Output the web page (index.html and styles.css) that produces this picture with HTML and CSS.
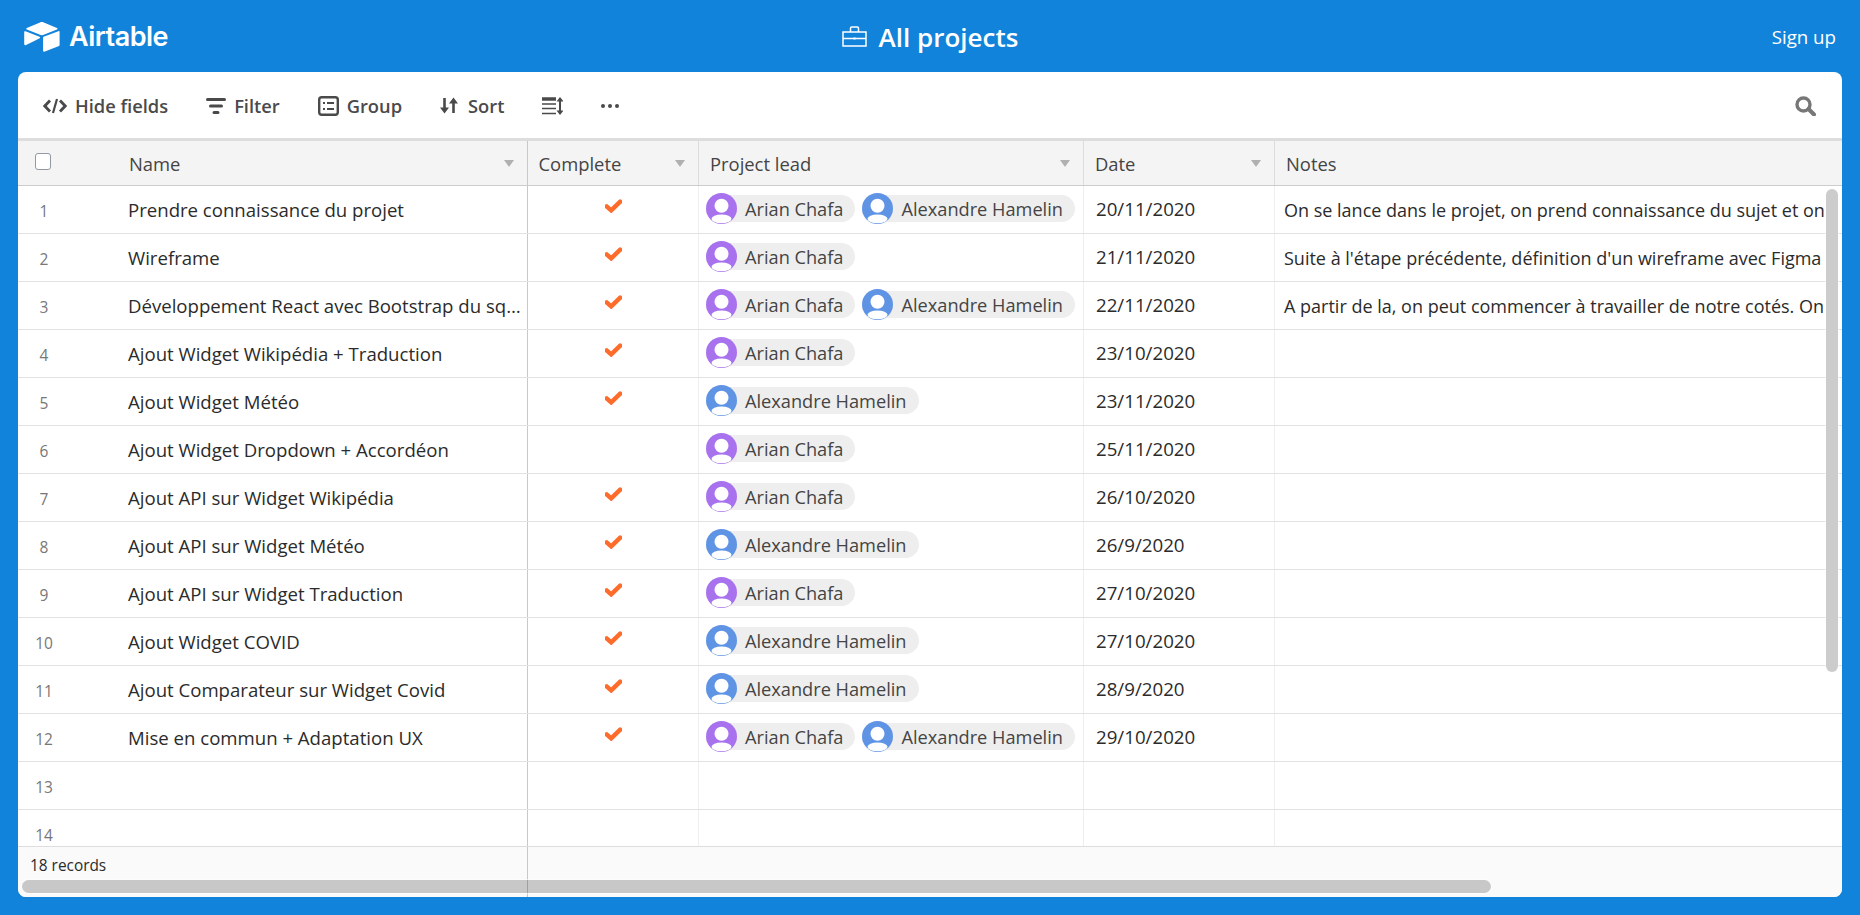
FILE: index.html
```html
<!DOCTYPE html>
<html lang="fr">
<head>
<meta charset="utf-8">
<title>All projects - Airtable</title>
<link rel="stylesheet" href="styles.css">
</head>
<body>
<svg class="defs" width="0" height="0" aria-hidden="true">
  <defs>
    <symbol id="avatar" viewBox="0 0 31 31">
      <circle cx="15.5" cy="15.5" r="15.5" fill="currentColor"/>
      <circle cx="15.5" cy="12.7" r="7" fill="#fff"/>
      <ellipse cx="15.5" cy="25.8" rx="10" ry="4.4" fill="#fff"/>
    </symbol>
    <symbol id="check" viewBox="0 0 17 14">
      <path d="M1.6 7.4 6.2 11.4 15.2 2.600" fill="none" stroke="currentColor" stroke-width="4.400" stroke-linecap="round"/>
    </symbol>
  </defs>
</svg>

<header class="topbar">
  <a class="brand">
    <svg class="logo" viewBox="0 0 200 170"><path d="M90.04 12.37 24.08 39.66c-3.67 1.52-3.63 6.73.06 8.19l66.24 26.27c5.82 2.31 12.3 2.31 18.12 0l66.23-26.27c3.69-1.46 3.73-6.67.06-8.19L108.83 12.37c-6.02-2.49-12.78-2.49-18.79 0"/><path d="M105.31 88.46v65.62c0 3.12 3.15 5.26 6.05 4.11l73.81-28.65c1.68-.67 2.79-2.3 2.79-4.11V59.81c0-3.12-3.15-5.26-6.05-4.11l-73.81 28.65c-1.68.67-2.79 2.3-2.79 4.11"/><path d="M88.08 91.85 66.17 102.42l-2.22 1.08-46.24 22.15c-2.93 1.41-6.67-.72-6.67-3.98V60.09c0-1.18.6-2.2 1.41-2.96.34-.34.72-.62 1.12-.84 1.1-.66 2.68-.84 4.02-.31l70.12 27.78c3.56 1.41 3.84 6.41.37 8.09"/></svg>
    <span class="brand-name">Airtable</span>
  </a>
  <h1 class="title">
    <svg class="briefcase" viewBox="0 0 25 21"><path d="M1 6h23v14H1zM1 12.500h23M8.500 6V2.200C8.500 1.500 9 1 9.700 1h5.600c.7 0 1.200.5 1.200 1.200V6" fill="none" stroke="#fff" stroke-width="1.500"/><path d="M11.500 11.500h2v2h-2z" fill="#fff"/></svg>
    <span class="title-text">All projects</span>
  </h1>
  <a class="signup">Sign up</a>
</header>

<main class="panel">
  <div class="toolbar">
    <button class="tool">
      <svg class="ti ti-hide" viewBox="0 0 24 16"><path d="M7 2.500 1.800 8 7 13.500M17 2.500 22.200 8 17 13.500" fill="none" stroke="currentColor" stroke-width="2.800"/><path d="M14 1 10 15" fill="none" stroke="currentColor" stroke-width="2.200"/></svg>
      <span>Hide fields</span>
    </button>
    <button class="tool">
      <svg class="ti ti-filter" viewBox="0 0 20 16"><path d="M1.500 1.500h17M4.500 8h11M8 14.500h4" fill="none" stroke="currentColor" stroke-width="3" stroke-linecap="round"/></svg>
      <span>Filter</span>
    </button>
    <button class="tool">
      <svg class="ti ti-group" viewBox="0 0 21 20"><rect x="1.200" y="1.200" width="18.600" height="17.600" rx="2.500" fill="none" stroke="currentColor" stroke-width="2.400"/><path d="M5 7h2M9 7h7M5 13h2M9 13h7" fill="none" stroke="currentColor" stroke-width="2"/></svg>
      <span>Group</span>
    </button>
    <button class="tool tool-sort">
      <svg class="ti ti-sort" viewBox="0 0 18 17"><path d="M4.500 1v12M13.500 16V4" fill="none" stroke="currentColor" stroke-width="2.600"/><path d="M0 10.500h9L4.500 16.500zM9 6.500h9L13.500 .5z" fill="currentColor"/></svg>
      <span>Sort</span>
    </button>
    <button class="tool">
      <svg class="ti ti-height" viewBox="0 0 21 18"><path d="M0 2h14" fill="none" stroke="currentColor" stroke-width="3.600"/><path d="M0 7h14M0 11.500h14M0 16.500h14" fill="none" stroke="currentColor" stroke-width="1.600"/><path d="M18 3v12" fill="none" stroke="currentColor" stroke-width="2"/><path d="M14.500 4.500 18 0l3.500 4.500zM14.500 13.500 18 18l3.500-4.500z" fill="currentColor"/></svg>
    </button>
    <button class="tool">
      <svg class="ti ti-dots" viewBox="0 0 18 4"><circle cx="2" cy="2" r="2" fill="currentColor"/><circle cx="9" cy="2" r="2" fill="currentColor"/><circle cx="16" cy="2" r="2" fill="currentColor"/></svg>
    </button>
    <svg class="ti-search" viewBox="0 0 21 20"><circle cx="8.500" cy="8.500" r="6.500" fill="none" stroke="currentColor" stroke-width="3.400"/><path d="M13.500 13 19 18.500" fill="none" stroke="currentColor" stroke-width="4" stroke-linecap="round"/></svg>
  </div>

  <div class="grid">
    <div class="row head">
      <div class="cell num"><span class="checkbox"></span></div>
      <div class="cell name">Name<i class="caret"></i></div>
      <div class="cell done">Complete<i class="caret"></i></div>
      <div class="cell lead">Project lead<i class="caret"></i></div>
      <div class="cell date">Date<i class="caret"></i></div>
      <div class="cell notes">Notes</div>
    </div>
    <div class="body">
      <div class="row">
        <div class="cell num">1</div>
        <div class="cell name"><span class="clip">Prendre connaissance du projet</span></div>
        <div class="cell done"><svg class="check"><use href="#check"/></svg></div>
        <div class="cell lead">
          <span class="pill"><svg class="avatar purple"><use href="#avatar"/></svg><span>Arian Chafa</span></span>
          <span class="pill"><svg class="avatar blue"><use href="#avatar"/></svg><span>Alexandre Hamelin</span></span>
        </div>
        <div class="cell date">20/11/2020</div>
        <div class="cell notes">On se lance dans le projet, on prend connaissance du sujet et on</div>
      </div>
      <div class="row">
        <div class="cell num">2</div>
        <div class="cell name"><span class="clip">Wireframe</span></div>
        <div class="cell done"><svg class="check"><use href="#check"/></svg></div>
        <div class="cell lead">
          <span class="pill"><svg class="avatar purple"><use href="#avatar"/></svg><span>Arian Chafa</span></span>
        </div>
        <div class="cell date">21/11/2020</div>
        <div class="cell notes">Suite à l'étape précédente, définition d'un wireframe avec Figma</div>
      </div>
      <div class="row">
        <div class="cell num">3</div>
        <div class="cell name"><span class="clip">Développement React avec Bootstrap du squelette</span></div>
        <div class="cell done"><svg class="check"><use href="#check"/></svg></div>
        <div class="cell lead">
          <span class="pill"><svg class="avatar purple"><use href="#avatar"/></svg><span>Arian Chafa</span></span>
          <span class="pill"><svg class="avatar blue"><use href="#avatar"/></svg><span>Alexandre Hamelin</span></span>
        </div>
        <div class="cell date">22/11/2020</div>
        <div class="cell notes">A partir de la, on peut commencer à travailler de notre cotés. On</div>
      </div>
      <div class="row">
        <div class="cell num">4</div>
        <div class="cell name"><span class="clip">Ajout Widget Wikipédia + Traduction</span></div>
        <div class="cell done"><svg class="check"><use href="#check"/></svg></div>
        <div class="cell lead">
          <span class="pill"><svg class="avatar purple"><use href="#avatar"/></svg><span>Arian Chafa</span></span>
        </div>
        <div class="cell date">23/10/2020</div>
        <div class="cell notes"></div>
      </div>
      <div class="row">
        <div class="cell num">5</div>
        <div class="cell name"><span class="clip">Ajout Widget Météo</span></div>
        <div class="cell done"><svg class="check"><use href="#check"/></svg></div>
        <div class="cell lead">
          <span class="pill"><svg class="avatar blue"><use href="#avatar"/></svg><span>Alexandre Hamelin</span></span>
        </div>
        <div class="cell date">23/11/2020</div>
        <div class="cell notes"></div>
      </div>
      <div class="row">
        <div class="cell num">6</div>
        <div class="cell name"><span class="clip">Ajout Widget Dropdown + Accordéon</span></div>
        <div class="cell done"></div>
        <div class="cell lead">
          <span class="pill"><svg class="avatar purple"><use href="#avatar"/></svg><span>Arian Chafa</span></span>
        </div>
        <div class="cell date">25/11/2020</div>
        <div class="cell notes"></div>
      </div>
      <div class="row">
        <div class="cell num">7</div>
        <div class="cell name"><span class="clip">Ajout API sur Widget Wikipédia</span></div>
        <div class="cell done"><svg class="check"><use href="#check"/></svg></div>
        <div class="cell lead">
          <span class="pill"><svg class="avatar purple"><use href="#avatar"/></svg><span>Arian Chafa</span></span>
        </div>
        <div class="cell date">26/10/2020</div>
        <div class="cell notes"></div>
      </div>
      <div class="row">
        <div class="cell num">8</div>
        <div class="cell name"><span class="clip">Ajout API sur Widget Météo</span></div>
        <div class="cell done"><svg class="check"><use href="#check"/></svg></div>
        <div class="cell lead">
          <span class="pill"><svg class="avatar blue"><use href="#avatar"/></svg><span>Alexandre Hamelin</span></span>
        </div>
        <div class="cell date">26/9/2020</div>
        <div class="cell notes"></div>
      </div>
      <div class="row">
        <div class="cell num">9</div>
        <div class="cell name"><span class="clip">Ajout API sur Widget Traduction</span></div>
        <div class="cell done"><svg class="check"><use href="#check"/></svg></div>
        <div class="cell lead">
          <span class="pill"><svg class="avatar purple"><use href="#avatar"/></svg><span>Arian Chafa</span></span>
        </div>
        <div class="cell date">27/10/2020</div>
        <div class="cell notes"></div>
      </div>
      <div class="row">
        <div class="cell num">10</div>
        <div class="cell name"><span class="clip">Ajout Widget COVID</span></div>
        <div class="cell done"><svg class="check"><use href="#check"/></svg></div>
        <div class="cell lead">
          <span class="pill"><svg class="avatar blue"><use href="#avatar"/></svg><span>Alexandre Hamelin</span></span>
        </div>
        <div class="cell date">27/10/2020</div>
        <div class="cell notes"></div>
      </div>
      <div class="row">
        <div class="cell num">11</div>
        <div class="cell name"><span class="clip">Ajout Comparateur sur Widget Covid</span></div>
        <div class="cell done"><svg class="check"><use href="#check"/></svg></div>
        <div class="cell lead">
          <span class="pill"><svg class="avatar blue"><use href="#avatar"/></svg><span>Alexandre Hamelin</span></span>
        </div>
        <div class="cell date">28/9/2020</div>
        <div class="cell notes"></div>
      </div>
      <div class="row">
        <div class="cell num">12</div>
        <div class="cell name"><span class="clip">Mise en commun + Adaptation UX</span></div>
        <div class="cell done"><svg class="check"><use href="#check"/></svg></div>
        <div class="cell lead">
          <span class="pill"><svg class="avatar purple"><use href="#avatar"/></svg><span>Arian Chafa</span></span>
          <span class="pill"><svg class="avatar blue"><use href="#avatar"/></svg><span>Alexandre Hamelin</span></span>
        </div>
        <div class="cell date">29/10/2020</div>
        <div class="cell notes"></div>
      </div>
      <div class="row">
        <div class="cell num">13</div>
        <div class="cell name"></div>
        <div class="cell done"></div>
        <div class="cell lead"></div>
        <div class="cell date"></div>
        <div class="cell notes"></div>
      </div>
      <div class="row">
        <div class="cell num">14</div>
        <div class="cell name"></div>
        <div class="cell done"></div>
        <div class="cell lead"></div>
        <div class="cell date"></div>
        <div class="cell notes"></div>
      </div>
    </div>
    <div class="scroll-y"></div>
  </div>

  <footer class="footer">
    <div class="count">18 records</div>
    <div class="scroll-x"></div>
  </footer>
</main>
</body>
</html>
```

FILE: styles.css
```css
* { box-sizing: border-box; }

html, body { height: 100%; }

body {
  margin: 0;
  overflow: hidden;
  background: #1283da;
  color: #2b2b2b;
  font-family: "Open Sans", "Noto Sans", "Liberation Sans", sans-serif;
  font-size: 18.2px;
  display: flex;
  flex-direction: column;
  padding: 0 18px 18px;
}

.defs { position: absolute; }

.topbar {
  flex: 0 0 72px;
  display: grid;
  grid-template-columns: 1fr auto 1fr;
  align-items: center;
  color: #fff;
  margin: 0 -18px;
}

.brand { display: flex; align-items: center; gap: 7px; padding: 2px 0 0 22px; }
.logo { width: 40px; height: 34px; fill: #fff; display: block; }
.brand-name { font-family: Inter, sans-serif; font-weight: 600; font-size: 27px; letter-spacing: -0.5px; line-height: 34px; }

.title { display: flex; align-items: center; gap: 12px; margin: 0; font-size: 26px; font-weight: 600; line-height: 34px; }
.title-text { padding-top: 2px; }
.briefcase { width: 25px; height: 21px; display: block; }

.signup { justify-self: end; font-size: 18.700px; padding-right: 24px; }

.panel {
  flex: 1;
  min-height: 0;
  position: relative;
  background: #fff;
  border-radius: 8px;
  overflow: hidden;
  display: flex;
  flex-direction: column;
}

.toolbar {
  flex: 0 0 66px;
  display: flex;
  align-items: center;
  gap: 38px;
  padding: 1px 26px 0 25px;
  color: #4a4a4a;
}

.tool {
  display: flex;
  align-items: center;
  gap: 8px;
  padding: 0;
  border: 0;
  background: none;
  color: inherit;
  font: inherit;
  font-size: 18.300px;
  font-weight: 600;
}
.tool-sort { gap: 10px; }

.ti { display: block; flex: none; }
.ti-hide { width: 24px; height: 16px; }
.ti-filter { width: 20px; height: 16px; }
.ti-group { width: 21px; height: 20px; }
.ti-sort { width: 18px; height: 17px; }
.ti-height { width: 21px; height: 18px; }
.ti-dots { width: 18px; height: 4px; }
.ti-search { width: 21px; height: 20px; margin-left: auto; color: #777; }

.grid {
  flex: 1;
  min-height: 0;
  position: relative;
  display: flex;
  flex-direction: column;
  border-top: 3px solid #ddd;
  overflow: hidden;
}

.row {
  flex: none;
  height: 48px;
  display: grid;
  grid-template-columns: 52px 458px 171px 385px 191px 1fr;
  border-bottom: 1px solid #e2e2e2;
}

.row.head {
  height: 45px;
  background: #f4f4f4;
  border-bottom: 1px solid #ccc;
  color: #444;
  font-size: 18.400px;
}

.body { flex: 1; min-height: 0; overflow: hidden; }

.cell {
  position: relative;
  display: flex;
  align-items: center;
  min-width: 0;
  white-space: nowrap;
  border-right: 1px solid #eee;
}

.head .cell { border-right-color: #ddd; }

.num { justify-content: center; color: #777; font-size: 15.500px; border-right: 0; padding-top: 2px; }
.head .num { border-right: 0; padding: 0 2px 3px 0; }

.checkbox {
  width: 16px;
  height: 17px;
  background: #fff;
  border: 1px solid #8f9aa5;
  border-radius: 3px;
}

.name { font-size: 18.600px; padding: 0 3px 0 58px; border-right-color: #c8c8c8; }
.head .name { font-size: 18.400px; padding-left: 59px; border-right-color: #c8c8c8; }
.clip { overflow: hidden; text-overflow: ellipsis; }

.done { justify-content: center; padding-bottom: 7px; }
.head .done { justify-content: flex-start; padding: 0 0 0 10.500px; }
.check { width: 17px; height: 14px; color: #ff6b2b; }

.lead { gap: 7px; padding: 0 0 2px 7px; }
.head .lead { padding: 0 0 0 11px; }

.pill {
  display: flex;
  align-items: center;
  height: 27px;
  padding-right: 12px;
  background: #eee;
  border-radius: 14px;
  color: #444;
}
.avatar { width: 31px; height: 31px; margin: -2px 8px -2px 0; flex: none; }
.purple { color: #a871ee; }
.blue { color: #5f94e5; }

.date { font-size: 18.700px; padding: 0 0 2px 12px; }
.head .date { font-size: 18.400px; padding: 0 0 0 11px; }

.notes { font-size: 18px; padding-left: 9px; border-right: 0; overflow: hidden; }
.head .notes { font-size: 18.400px; padding-left: 11px; }

.caret {
  position: absolute;
  right: 13px;
  top: 50%;
  margin-top: -3px;
  width: 0;
  height: 0;
  border: 5px solid transparent;
  border-top: 7px solid #b0b0b0;
  border-bottom: 0;
}

.footer {
  flex: 0 0 51px;
  background: #fafafa;
  border-top: 1px solid #ddd;
  margin-top: -1px;
  position: relative;
  z-index: 1;
}

.count {
  width: 510px;
  height: 100%;
  padding: 9px 0 0 12px;
  border-right: 1px solid #c8c8c8;
  font-size: 15.400px;
  line-height: 20px;
}

.scroll-y {
  position: absolute;
  top: 48px;
  right: 4px;
  width: 12px;
  height: 483px;
  background: #ccc;
  border-radius: 6px;
  box-shadow: 0 0 0 1px rgba(255, 255, 255, .6);
  z-index: 2;
}

.scroll-x {
  position: absolute;
  left: 4px;
  bottom: 4px;
  width: 1469px;
  height: 13px;
  background: rgba(0, 0, 0, .2);
  border-radius: 7px;
  box-shadow: 0 0 0 1px rgba(255, 255, 255, .6);
}
```
